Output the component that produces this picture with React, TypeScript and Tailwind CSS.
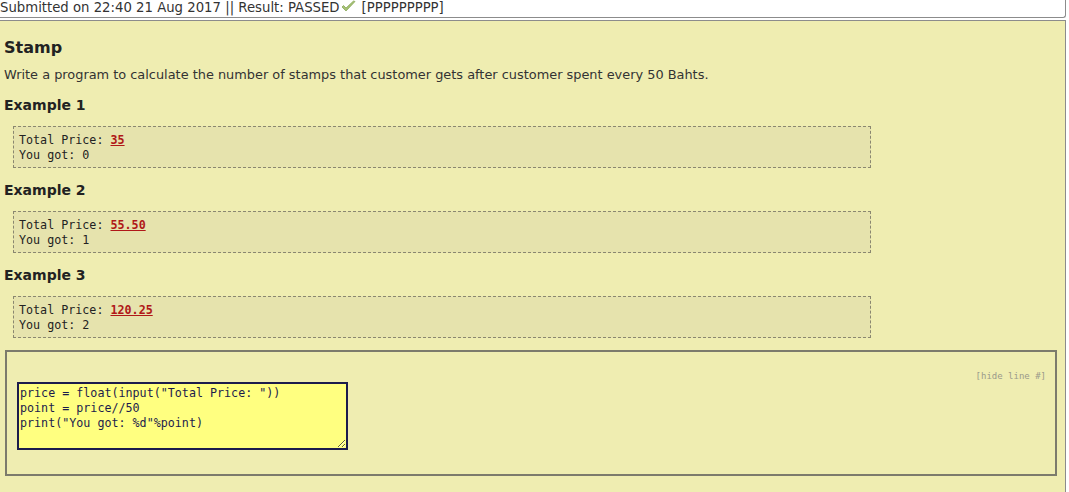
import React from 'react';

const examples = [
  { title: 'Example 1', price: '35', got: '0' },
  { title: 'Example 2', price: '55.50', got: '1' },
  { title: 'Example 3', price: '120.25', got: '2' },
];

const code = `price = float(input("Total Price: "))
point = price//50
print("You got: %d"%point)`;

function CheckIcon() {
  return (
    <svg width="15" height="13" viewBox="0 0 15 13" className="inline-block align-[-1px] ml-[1px] mr-[6px]">
      <path d="M1 7 L5 11 L14 1.5 L12.5 1 L5 8 L2.5 5.5 Z" fill="#a6c274" stroke="#8aa85a" strokeWidth="0.8" strokeLinejoin="round" />
    </svg>
  );
}

export default function App() {
  return (
    <div className="w-[1069px] h-[492px] bg-white overflow-hidden font-['DejaVu_Sans',Verdana,sans-serif] text-[#333]">
      <div className="mr-[3px] h-[18px] border-r border-b border-[#8c8c8c] rounded-br-[3px] text-[13.25px] leading-[16px] whitespace-nowrap">
        Submitted on 22:40 21 Aug 2017 || Result: PASSED
        <CheckIcon />
        [PPPPPPPPP]
      </div>

      <div className="mt-[2px] mr-[3px] h-[480px] bg-[#efedb1] border-t border-r border-[#8c8c8c] pl-[4px] pt-[17px]">
        <h1 className="text-[16px] leading-[20px] font-bold text-[#222]">Stamp</h1>
        <p className="mt-[9px] text-[12.9px] leading-[16px]">
          Write a program to calculate the number of stamps that customer gets after customer spent every 50 Bahts.
        </p>

        {examples.map((ex) => (
          <div key={ex.title}>
            <h2 className="mt-[13px] text-[14px] leading-[18px] font-bold text-[#222]">{ex.title}</h2>
            <div className="mt-[12px] ml-[9px] w-[858px] border border-dashed border-[#8a8770] bg-[#e6e3ad] px-[5px] pt-[6px] pb-[4px] font-['DejaVu_Sans_Mono',monospace] text-[11.7px] leading-[15px] text-[#222]">
              <div>
                Total Price: <span className="font-bold text-[#b01818] underline">{ex.price}</span>
              </div>
              <div>You got: {ex.got}</div>
            </div>
          </div>
        ))}

        <div className="mt-[12px] ml-[1px] w-[1052px] h-[126px] border-2 border-[#7c7b6c] pt-[18px] pl-[10px] pr-[9px]">
          <div className="flex justify-end font-['DejaVu_Sans_Mono',monospace] text-[9px] leading-[12px] text-[#9a9a8a]">
            [hide line #]
          </div>
          <textarea
            readOnly
            defaultValue={code}
            className="block w-[331px] h-[68px] border-2 border-[#1c1c4c] bg-[#ffff80] px-[1px] pt-[2px] pb-[1px] font-['DejaVu_Sans_Mono',monospace] text-[11.7px] leading-[15px] text-[#1c1c4c] outline-none resize-y"
          />
        </div>
      </div>
    </div>
  );
}
